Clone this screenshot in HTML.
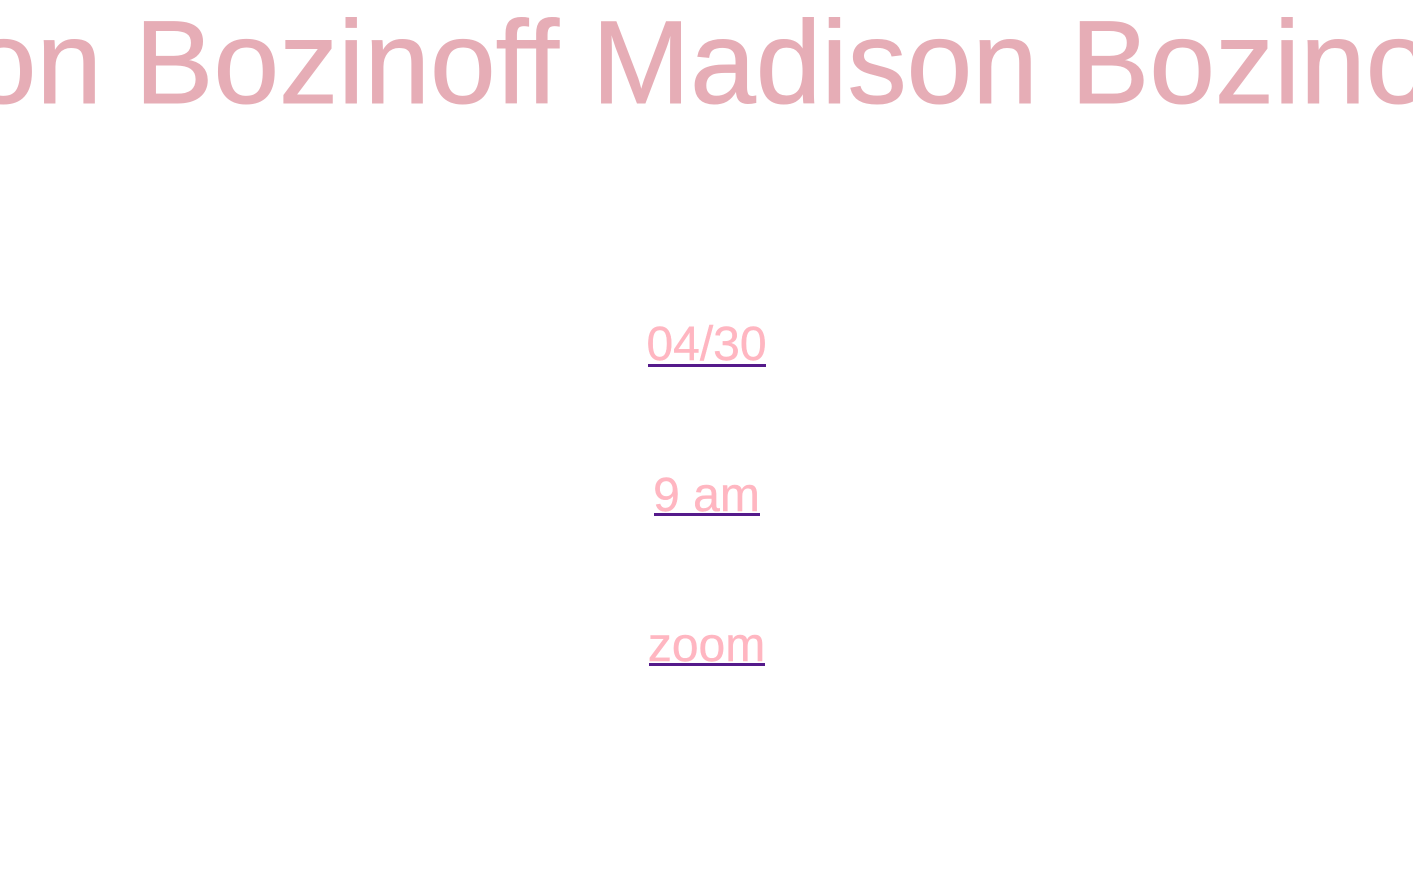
<!DOCTYPE html>
<html><head><style>
body{margin:0;width:1413px;height:873px;overflow:hidden;background:#fff;font-family:"Liberation Sans",Arial,sans-serif;position:relative}
.m{position:absolute;top:4px;left:-344px;white-space:nowrap;font-size:118px;line-height:118px;color:#e6adb6;-webkit-text-stroke:1px #e6adb6}
.l{position:absolute;left:0;width:1413px;text-align:center;font-size:48px;line-height:48px;color:#ffb6c1;-webkit-text-stroke:0.4px #ffb6c1}
.u{position:absolute;height:3px;background:#551a8b}
</style></head><body>
<div class="m">Madison Bozinoff Madison Bozinoff Madison Bozinoff</div>
<div class="l" style="top:321px">04/30</div>
<div class="u" style="top:364px;left:648px;width:118px"></div>
<div class="l" style="top:472px">9 am</div>
<div class="u" style="top:513px;left:654px;width:106px"></div>
<div class="l" style="top:622px">zoom</div>
<div class="u" style="top:663px;left:649px;width:116px"></div>
</body></html>
